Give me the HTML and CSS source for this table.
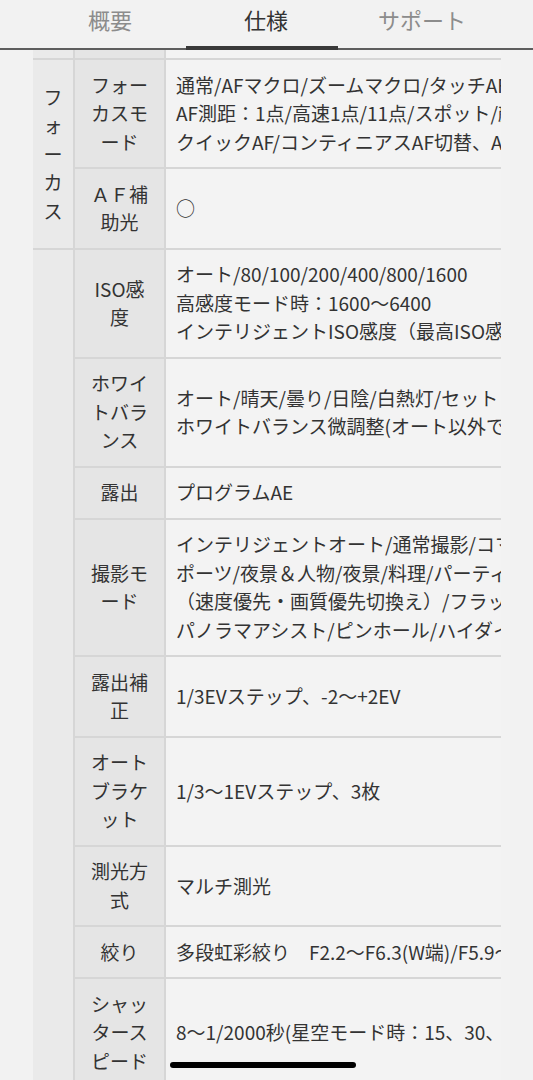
FILE: index.html
```html
<!DOCTYPE html>
<html lang="ja">
<head>
<meta charset="utf-8">
<title>仕様</title>
<link rel="stylesheet" href="styles.css">
</head>
<body>
<div class="screen">
  <nav class="tabs">
    <div class="tab">概要</div>
    <div class="tab active">仕様</div>
    <div class="tab">サポート</div>
  </nav>
  <div class="scroller">
    <table class="spec">
      <colgroup><col class="c1"><col class="c2"><col class="c3"></colgroup>
      <tr class="partial"><td class="grp"></td><td class="lbl"></td><td class="val"></td></tr>
      <tr>
        <td class="grp" rowspan="2">フォーカス</td>
        <td class="lbl">フォーカスモード</td>
        <td class="val">通常/AFマクロ/ズームマクロ/タッチAF/タッチシャッター<br>AF測距：1点/高速1点/11点/スポット/顔・瞳認識/追尾<br>クイックAF/コンティニアスAF切替、AF/MF切替</td>
      </tr>
      <tr>
        <td class="lbl">ＡＦ補助光</td>
        <td class="val">○</td>
      </tr>
      <tr>
        <td class="grp" rowspan="10"></td>
        <td class="lbl">ISO感度</td>
        <td class="val">オート/80/100/200/400/800/1600<br>高感度モード時：1600～6400<br>インテリジェントISO感度（最高ISO感度設定可能）</td>
      </tr>
      <tr>
        <td class="lbl">ホワイトバランス</td>
        <td class="val">オート/晴天/曇り/日陰/白熱灯/セット<br>ホワイトバランス微調整(オート以外で可能)</td>
      </tr>
      <tr>
        <td class="lbl">露出</td>
        <td class="val">プログラムAE</td>
      </tr>
      <tr>
        <td class="lbl">撮影モード</td>
        <td class="val">インテリジェントオート/通常撮影/コマ撮り/ス<br>ポーツ/夜景＆人物/夜景/料理/パーティー/連写<br>（速度優先・画質優先切換え）/フラッシュ連写/<br>パノラマアシスト/ピンホール/ハイダイナミック</td>
      </tr>
      <tr>
        <td class="lbl">露出補正</td>
        <td class="val">1/3EVステップ、-2～+2EV</td>
      </tr>
      <tr>
        <td class="lbl">オートブラケット</td>
        <td class="val">1/3～1EVステップ、3枚</td>
      </tr>
      <tr>
        <td class="lbl">測光方式</td>
        <td class="val">マルチ測光</td>
      </tr>
      <tr>
        <td class="lbl">絞り</td>
        <td class="val">多段虹彩絞り　F2.2～F6.3(W端)/F5.9～F16(T端)</td>
      </tr>
      <tr>
        <td class="lbl">シャッタースピード</td>
        <td class="val">8～1/2000秒(星空モード時：15、30、60秒)</td>
      </tr>
    </table>
  </div>
  <div class="home-indicator"></div>
</div>
</body>
</html>
```
FILE: styles.css
```css
* { box-sizing: border-box; }
html, body { margin: 0; padding: 0; }
body {
  background: #f2f2f2;
  font-family: "Noto Sans CJK JP", "Noto Sans", sans-serif;
  color: #333;
}
.screen {
  position: relative;
  width: 533px;
  height: 1080px;
  overflow: hidden;
}
.tabs {
  display: flex;
  height: 50px;
  padding-left: 32px;
  border-bottom: 2px solid #5e5e5e;
}
.tab {
  position: relative;
  width: 156px;
  font-size: 22px;
  line-height: 39px;
  text-align: center;
  color: #8c8c8c;
}
.tab.active { color: #333; }
.tab.active::after {
  content: "";
  position: absolute;
  left: -2px;
  bottom: -2px;
  width: 152px;
  height: 4px;
  background: #3a3a3a;
}
.scroller {
  width: 501px;
  overflow: hidden;
  padding-left: 33px;
}
.spec {
  border-collapse: collapse;
  table-layout: fixed;
  width: 932px;
  font-size: 19px;
  line-height: 28.5px;
}
.c1 { width: 41px; }
.c2 { width: 91px; }
.c3 { width: 800px; }
.spec td {
  border: 2px solid #d6d6d6;
  vertical-align: middle;
}
.spec tr:first-child td { border-top: none; }
.spec td:first-child { border-left: none; }
.spec td:last-child { border-right: none; }
.grp {
  background: #eaeaea;
  text-align: center;
  padding: 0 6px;
}
.lbl {
  background: #e5e5e5;
  text-align: center;
  padding: 10.75px 14px;
}
.val {
  background: #f3f3f3;
  padding: 10.75px 0 10.75px 10px;
  white-space: nowrap;
}
.partial td { height: 9px; padding: 0; }
.home-indicator {
  position: absolute;
  left: 170px;
  top: 1062px;
  width: 186px;
  height: 6px;
  border-radius: 3px;
  background: #000;
}
```
